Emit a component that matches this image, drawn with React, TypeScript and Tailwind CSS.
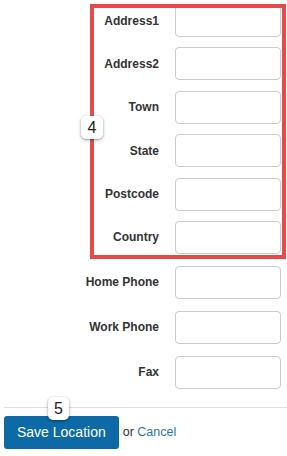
import React from "react";

type Field = { label: string };

const boxed: Field[] = [
  { label: "Address1" },
  { label: "Address2" },
  { label: "Town" },
  { label: "State" },
  { label: "Postcode" },
  { label: "Country" },
];

const phones: Field[] = [{ label: "Home Phone" }, { label: "Work Phone" }, { label: "Fax" }];

function Row({ label }: Field) {
  return (
    <div className="flex items-center h-[33px]">
      <label className="w-[155px] text-right text-[12px] font-bold text-[#333]">{label}</label>
      <input
        type="text"
        className="ml-[16px] w-[106px] h-[33px] rounded-[4px] border border-[#ccc] bg-white outline-none"
      />
    </div>
  );
}

function Badge({ n, className }: { n: number; className: string }) {
  return (
    <div
      className={`absolute flex items-center justify-center bg-white rounded-[5px] text-[16px] leading-none text-[#222] shadow-[0_1px_3px_rgba(0,0,0,0.45)] ${className}`}
    >
      {n}
    </div>
  );
}

export default function App() {
  return (
    <div
      className="relative w-[287px] h-[456px] bg-white overflow-hidden pl-[4px]"
      style={{ fontFamily: '"Liberation Sans", Arial, sans-serif' }}
    >
      <div className="flex flex-col gap-[10.4px] pt-[4px]">
        {boxed.map(f => (
          <Row key={f.label} {...f} />
        ))}
      </div>

      <div className="flex flex-col gap-[12px] mt-[12px]">
        {phones.map(f => (
          <Row key={f.label} {...f} />
        ))}
      </div>

      <div className="mt-[18px] border-t border-[#ddd]" />

      <div className="flex items-center mt-[8px]">
        <button className="h-[33px] px-[13px] rounded-[3px] bg-[#0d6aa6] text-white text-[14px]">
          Save Location
        </button>
        <span className="ml-[4px] text-[12.5px] text-[#333]">
          or <a className="text-[#2a74b3]">Cancel</a>
        </span>
      </div>

      {/* annotation overlay */}
      <div className="absolute left-[90px] top-[4px] w-[196px] h-[255px] border-[4px] border-[#e84a4a] pointer-events-none" />
      <Badge n={4} className="left-[81px] top-[116px] w-[22px] h-[23px]" />
      <Badge n={5} className="left-[48px] top-[397px] w-[21px] h-[23px]" />
    </div>
  );
}
